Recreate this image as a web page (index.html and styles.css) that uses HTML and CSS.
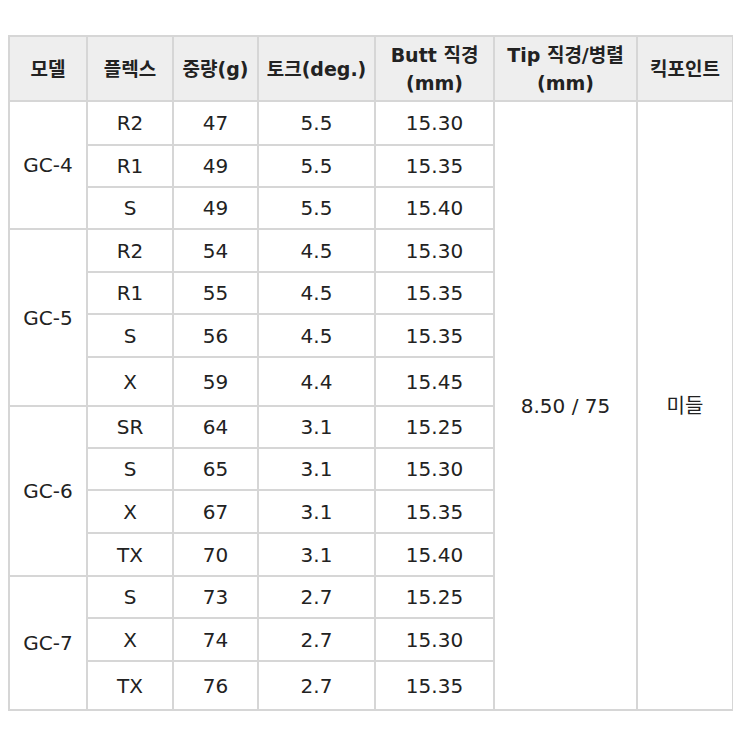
FILE: index.html
```html
<!DOCTYPE html>
<html lang="ko">
<head>
<meta charset="utf-8">
<link rel="stylesheet" href="styles.css">
</head>
<body>
<table class="spec">
  <colgroup>
    <col class="c1"><col class="c2"><col class="c3"><col class="c4"><col class="c5"><col class="c6"><col class="c7">
  </colgroup>
  <thead>
    <tr>
      <th>모델</th>
      <th>플렉스</th>
      <th>중량(g)</th>
      <th>토크(deg.)</th>
      <th>Butt 직경<br>(mm)</th>
      <th>Tip 직경/병렬<br>(mm)</th>
      <th>킥포인트</th>
    </tr>
  </thead>
  <tbody>
    <tr class="h44"><td rowspan="3">GC-4</td><td>R2</td><td>47</td><td>5.5</td><td>15.30</td><td rowspan="14" class="mid">8.50 / 75</td><td rowspan="14" class="mid">미들</td></tr>
    <tr class="h42"><td>R1</td><td>49</td><td>5.5</td><td>15.35</td></tr>
    <tr class="h42"><td>S</td><td>49</td><td>5.5</td><td>15.40</td></tr>
    <tr class="h43"><td rowspan="4">GC-5</td><td>R2</td><td>54</td><td>4.5</td><td>15.30</td></tr>
    <tr class="h42"><td>R1</td><td>55</td><td>4.5</td><td>15.35</td></tr>
    <tr class="h43"><td>S</td><td>56</td><td>4.5</td><td>15.35</td></tr>
    <tr class="h49"><td>X</td><td>59</td><td>4.4</td><td>15.45</td></tr>
    <tr class="h42"><td rowspan="4">GC-6</td><td>SR</td><td>64</td><td>3.1</td><td>15.25</td></tr>
    <tr class="h42"><td>S</td><td>65</td><td>3.1</td><td>15.30</td></tr>
    <tr class="h43"><td>X</td><td>67</td><td>3.1</td><td>15.35</td></tr>
    <tr class="h43"><td>TX</td><td>70</td><td>3.1</td><td>15.40</td></tr>
    <tr class="h42"><td rowspan="3">GC-7</td><td>S</td><td>73</td><td>2.7</td><td>15.25</td></tr>
    <tr class="h43"><td>X</td><td>74</td><td>2.7</td><td>15.30</td></tr>
    <tr class="h49"><td>TX</td><td>76</td><td>2.7</td><td>15.35</td></tr>
  </tbody>
</table>
</body>
</html>
```

FILE: styles.css
```css
html, body {
  background: #ffffff;
}
body {
  margin: 8px;
}
.spec {
  margin-top: 27px;
  width: 726px;
  border-collapse: collapse;
  table-layout: fixed;
  font-family: "DejaVu Sans", Verdana, "Noto Sans CJK KR", sans-serif;
  font-size: 20px;
  color: #222222;
}
.c1 { width: 78px; }
.c2 { width: 86px; }
.c3 { width: 85px; }
.c4 { width: 117px; }
.c5 { width: 119px; }
.c6 { width: 143px; }
.c7 { width: 96px; }
.spec th,
.spec td {
  border: 2px solid #d6d6d6;
  text-align: center;
  vertical-align: middle;
  padding: 0;
}
.spec th {
  background: #eeeeee;
  height: 63px;
  font-family: "DejaVu Sans", Verdana, "Noto Sans CJK KR", sans-serif;
  font-weight: 700;
  font-size: 19px;
  line-height: 28px;
  color: #222222;
}
.spec td {
  line-height: 22px;
}
.h42 td { height: 40px; }
.h43 td { height: 41px; }
.h44 td { height: 42px; }
.h49 td { height: 47px; }
```
